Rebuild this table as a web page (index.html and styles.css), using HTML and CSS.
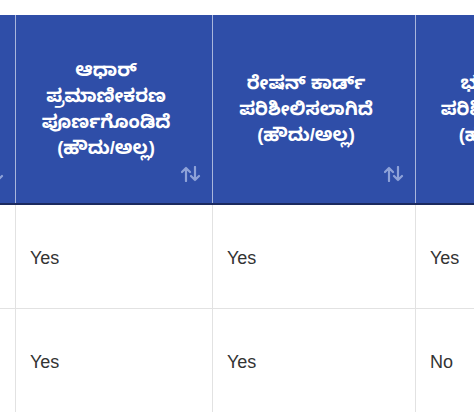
FILE: index.html
```html
<!DOCTYPE html>
<html lang="kn">
<head>
<meta charset="utf-8">
<link rel="stylesheet" href="styles.css">
</head>
<body>
<div class="scroller">
  <table class="grid">
    <colgroup>
      <col class="c0"><col class="c1"><col class="c2"><col class="c3">
    </colgroup>
    <thead>
      <tr>
        <th><span class="label">ಹೆಸರು</span><svg class="sort" viewBox="0 0 20 16"><path d="M5 15V2M1 6l4-4 4 4M14 1v13M10 10l4 4 4-4"/></svg></th>
        <th><span class="label">ಆಧಾರ್ ಪ್ರಮಾಣೀಕರಣ ಪೂರ್ಣಗೊಂಡಿದೆ (ಹೌದು/ಅಲ್ಲ)</span><svg class="sort" viewBox="0 0 20 16"><path d="M5 15V2M1 6l4-4 4 4M14 1v13M10 10l4 4 4-4"/></svg></th>
        <th><span class="label">ರೇಷನ್ ಕಾರ್ಡ್ ಪರಿಶೀಲಿಸಲಾಗಿದೆ (ಹೌದು/ಅಲ್ಲ)</span><svg class="sort" viewBox="0 0 20 16"><path d="M5 15V2M1 6l4-4 4 4M14 1v13M10 10l4 4 4-4"/></svg></th>
        <th><span class="label">ಭೂ ದಾಖಲೆ ಪರಿಶೀಲಿಸಲಾಗಿದೆ (ಹೌದು/ಅಲ್ಲ)</span><svg class="sort" viewBox="0 0 20 16"><path d="M5 15V2M1 6l4-4 4 4M14 1v13M10 10l4 4 4-4"/></svg></th>
      </tr>
    </thead>
    <tbody>
      <tr><td>1</td><td>Yes</td><td>Yes</td><td>Yes</td></tr>
      <tr><td>2</td><td>Yes</td><td>Yes</td><td>No</td></tr>
    </tbody>
  </table>
</div>
</body>
</html>
```

FILE: styles.css
```css
html, body {
  margin: 0;
  padding: 0;
  background: #ffffff;
}
body {
  font-family: "Liberation Sans", "Noto Sans", "Noto Sans Kannada", sans-serif;
}
.scroller {
  width: 474px;
  height: 413px;
  overflow: hidden;
  padding-top: 15px;
  box-sizing: border-box;
}
.grid {
  border-collapse: collapse;
  table-layout: fixed;
  width: 800px;
  margin-left: -185px;
}
.c0 { width: 200px; }
.c1 { width: 197px; }
.c2 { width: 203px; }
.c3 { width: 200px; }
.grid th {
  position: relative;
  height: 188px;
  background: #2f4ea8;
  color: #ffffff;
  font-weight: 700;
  font-size: 18.5px;
  line-height: 26px;
  text-align: center;
  vertical-align: middle;
  padding: 0 27px 0 11px;
  border-left: 1px solid #a9b6dc;
  border-right: 1px solid #a9b6dc;
  border-bottom: 2px solid #1b2a5e;
}
.grid th .sort {
  position: absolute;
  right: 11px;
  bottom: 21px;
  width: 20px;
  height: 16px;
  fill: none;
  stroke: #8ea2d8;
  stroke-width: 2.2;
  stroke-linecap: round;
  stroke-linejoin: round;
}
.grid td {
  height: 99px;
  padding: 4px 14px 0;
  font-size: 18px;
  color: #333333;
  vertical-align: middle;
  border: 1px solid #e2e2e2;
  border-top: none;
}
.grid tbody tr:last-child td {
  border-bottom: none;
}
```
